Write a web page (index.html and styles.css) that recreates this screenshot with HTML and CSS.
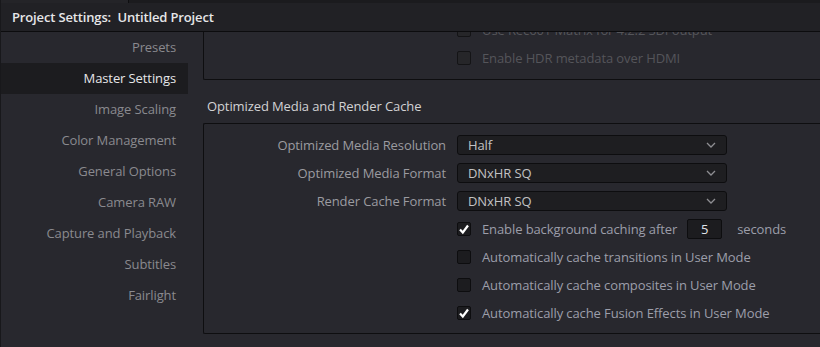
FILE: index.html
```html
<!DOCTYPE html>
<html lang="en">
<head>
  <meta charset="UTF-8">
  <title>Project Settings</title>
  <link rel="stylesheet" href="styles.css">
</head>
<body>

<div class="top-strip">
  <div class="strip-left"></div>
  <div class="strip-right"></div>
</div>

<header class="title-bar">
  <h1>Project Settings:&nbsp; Untitled Project</h1>
</header>

<div class="main">

  <nav class="sidebar">
    <a>Presets</a>
    <a class="active">Master Settings</a>
    <a>Image Scaling</a>
    <a>Color Management</a>
    <a>General Options</a>
    <a>Camera RAW</a>
    <a>Capture and Playback</a>
    <a>Subtitles</a>
    <a>Fairlight</a>
  </nav>

  <div class="content">

    <div class="group group-top">
      <div class="row">
        <span></span>
        <label class="check disabled"><span class="box"></span>Use Rec601 Matrix for 4:2:2 SDI output</label>
      </div>
      <div class="row">
        <span></span>
        <label class="check disabled"><span class="box"></span>Enable HDR metadata over HDMI</label>
      </div>
    </div>

    <h2 class="section-title">Optimized Media and Render Cache</h2>

    <div class="group">
      <div class="row">
        <span class="label">Optimized Media Resolution</span>
        <div class="select">Half<svg width="10" height="6" viewBox="0 0 10 6"><polyline points="1,1 5,5 9,1" fill="none" stroke="#8e8e92" stroke-width="1.3"/></svg></div>
      </div>
      <div class="row">
        <span class="label">Optimized Media Format</span>
        <div class="select">DNxHR SQ<svg width="10" height="6" viewBox="0 0 10 6"><polyline points="1,1 5,5 9,1" fill="none" stroke="#8e8e92" stroke-width="1.3"/></svg></div>
      </div>
      <div class="row">
        <span class="label">Render Cache Format</span>
        <div class="select">DNxHR SQ<svg width="10" height="6" viewBox="0 0 10 6"><polyline points="1,1 5,5 9,1" fill="none" stroke="#8e8e92" stroke-width="1.3"/></svg></div>
      </div>
      <div class="row">
        <span></span>
        <label class="check"><span class="box checked"><svg width="12" height="12" viewBox="0 0 12 12"><path d="M2 6.5 L4.8 9.5 L10 2.5" fill="none" stroke="#ffffff" stroke-width="2.2"/></svg></span>Enable background caching after<span class="num">5</span><span class="unit">seconds</span></label>
      </div>
      <div class="row">
        <span></span>
        <label class="check"><span class="box"></span>Automatically cache transitions in User Mode</label>
      </div>
      <div class="row">
        <span></span>
        <label class="check"><span class="box"></span>Automatically cache composites in User Mode</label>
      </div>
      <div class="row">
        <span></span>
        <label class="check"><span class="box checked"><svg width="12" height="12" viewBox="0 0 12 12"><path d="M2 6.5 L4.8 9.5 L10 2.5" fill="none" stroke="#ffffff" stroke-width="2.2"/></svg></span>Automatically cache Fusion Effects in User Mode</label>
      </div>
    </div>

  </div>
</div>

</body>
</html>
```

FILE: styles.css
```css
html, body {
  height: 100%;
}

body {
  margin: 0;
  font-family: 'Open Sans', 'Noto Sans', sans-serif;
  font-size: 13px;
  letter-spacing: -0.1px;
  background-color: #28282e;
  color: #9b9ba0;
  overflow: hidden;
  border-left: 1px solid #18181b;
  box-sizing: border-box;
}

.top-strip {
  display: flex;
  height: 3px;
}

.strip-left {
  width: 127px;
  background: #242428;
  border-right: 1px solid #0e0e10;
}

.strip-right {
  flex: 1;
  background: #1b1b1e;
}

.title-bar {
  height: 28px;
  background-color: #212125;
  border-bottom: 1px solid #0c0c0e;
  display: flex;
  align-items: center;
  padding-left: 11px;
}

.title-bar h1 {
  margin: 0;
  font-size: 13px;
  font-weight: 600;
  letter-spacing: -0.15px;
  color: #e6e6e8;
}

.main {
  display: flex;
  height: calc(100% - 32px);
}

.sidebar {
  width: 187px;
  flex-shrink: 0;
  margin-right: 15px;
  display: flex;
  flex-direction: column;
}

.sidebar a {
  height: 31px;
  line-height: 31px;
  text-align: right;
  padding-right: 12px;
  color: #8a8a8f;
  cursor: pointer;
}

.sidebar a.active {
  background-color: #1c1c1f;
  color: #e6e6e8;
}

.content {
  flex: 1;
  overflow: hidden;
}

.group {
  border: 1px solid #0e0e10;
  border-right: none;
  border-radius: 2px 0 0 2px;
  padding: 7px 0 6px;
}

.group-top {
  margin-top: -18px;
  padding: 1px 0 7px;
}

.row {
  display: grid;
  grid-template-columns: 242px 1fr;
  column-gap: 11px;
  height: 28px;
  align-items: center;
}

.label {
  text-align: right;
  color: #9b9ba0;
}

.select {
  width: 248px;
  height: 18px;
  background-color: #1e1e21;
  border: 1px solid #0d0d0f;
  border-radius: 3px;
  display: flex;
  align-items: center;
  justify-content: space-between;
  padding: 0 10px;
  color: #c2c2c4;
}

.check {
  display: flex;
  align-items: center;
  color: #9c9eaa;
  white-space: nowrap;
}

.check.disabled {
  color: #55555a;
}

.box {
  width: 12px;
  height: 12px;
  border: 1px solid #0d0d0f;
  background-color: #1c1c1f;
  border-radius: 2px;
  margin-right: 11px;
  display: flex;
  align-items: center;
  justify-content: center;
}

.check.disabled .box {
  background-color: #262629;
  border-color: #141416;
}

.num {
  width: 33px;
  height: 18px;
  line-height: 18px;
  border: 1px solid #0d0d0f;
  border-radius: 2px;
  background-color: #1c1c1f;
  color: #e0e4ea;
  text-align: center;
  margin-left: 10px;
}

.unit {
  margin-left: 15px;
}

.section-title {
  margin: 0;
  font-size: 13px;
  font-weight: normal;
  color: #d2d2d4;
  padding: 17px 0 8px 4px;
  line-height: 18px;
}
```
